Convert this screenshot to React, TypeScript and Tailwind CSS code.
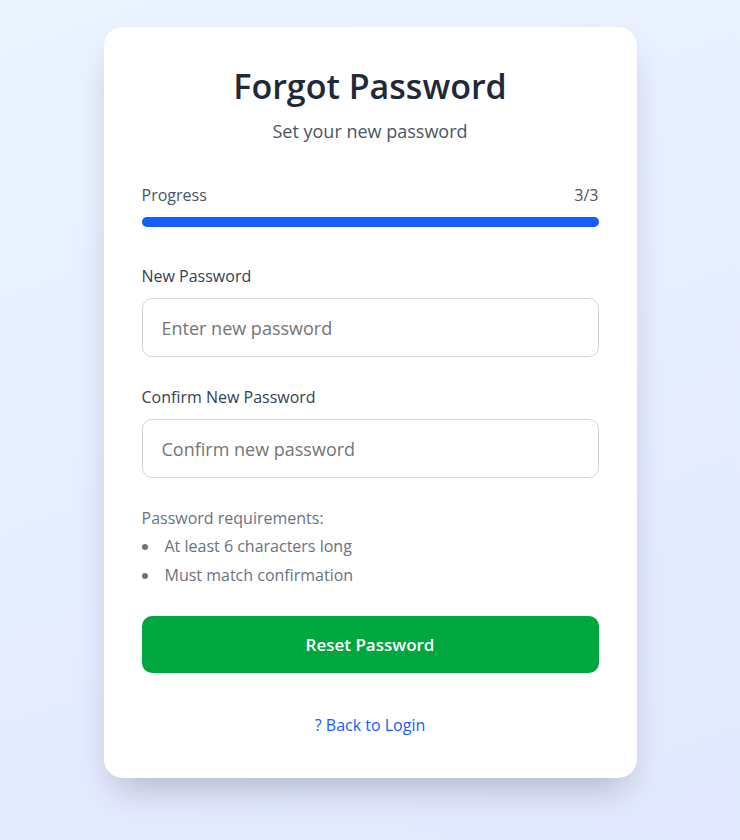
import { useState } from "react";

const inputClass =
  "block h-[59px] w-full rounded-[10px] border border-gray-300 px-[19px] text-[18px] text-gray-800 placeholder:text-[#757575] outline-none focus:border-blue-600";
const labelClass = "mb-[10px] block text-[16px] leading-6 font-medium text-gray-700";

export default function App() {
  const [password, setPassword] = useState("");
  const [confirmation, setConfirmation] = useState("");

  return (
    <div className="flex min-h-screen items-start justify-center bg-[linear-gradient(160deg,#ebf3ff,#e2e8ff)] px-5 pt-[27px] pb-[62px] font-['Trebuchet_MS','Open_Sans',sans-serif]">
      <main className="w-full max-w-[533px] rounded-[19px] bg-white p-[38px] shadow-[0_20px_36px_-10px_rgba(0,0,0,0.22)]">
        <header className="mb-[38px] text-center">
          <h1 className="mb-[10px] text-[34px] leading-[43px] font-semibold text-gray-800">Forgot Password</h1>
          <p className="text-[18px] leading-[27px] text-gray-600">Set your new password</p>
        </header>
        <section className="mb-[37px] text-[16px] leading-6 text-gray-600">
          <div className="mb-[10px] flex justify-between">
            <span>Progress</span>
            <span>3/3</span>
          </div>
          <div className="h-[10px] rounded-full bg-gray-200">
            <div className="h-full w-full rounded-full bg-blue-600" />
          </div>
        </section>
        <form onSubmit={(event) => event.preventDefault()}>
          <div className="mb-7">
            <label htmlFor="password" className={labelClass}>New Password</label>
            <input id="password" type="password" placeholder="Enter new password" value={password} onChange={(event) => setPassword(event.target.value)} className={inputClass} />
          </div>
          <div className="mb-7">
            <label htmlFor="confirmation" className={labelClass}>Confirm New Password</label>
            <input id="confirmation" type="password" placeholder="Confirm new password" value={confirmation} onChange={(event) => setConfirmation(event.target.value)} className={inputClass} />
          </div>
          <div className="mb-[29px] text-[16px] leading-6 text-gray-500">
            <p>Password requirements:</p>
            <ul className="mt-1 list-inside list-disc space-y-[5px]">
              <li>At least 6 characters long</li>
              <li>Must match confirmation</li>
            </ul>
          </div>
          <button type="submit" className="h-[57px] w-full rounded-[10px] bg-green-600 text-[17px] font-semibold text-white">Reset Password</button>
        </form>
        <p className="mt-[38px] text-center text-[16px] leading-[29px]">
          <a href="#login" className="font-medium text-blue-600">? Back to Login</a>
        </p>
      </main>
    </div>
  );
}
